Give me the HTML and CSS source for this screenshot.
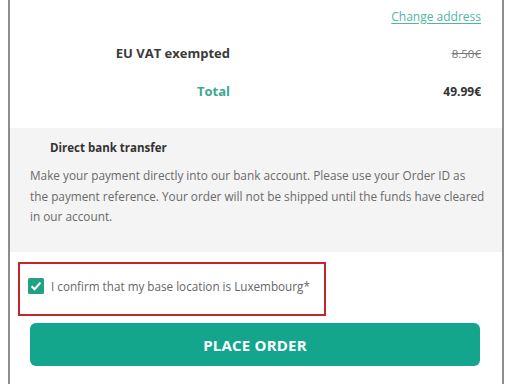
FILE: index.html
```html
<!DOCTYPE html>
<html>
<head>
<meta charset="utf-8">
<link rel="stylesheet" href="styles.css">
</head>
<body>
<div class="panel">
  <section class="totals">
    <div class="change-row"><a class="change-link" href="#">Change address</a></div>
    <div class="sum-row">
      <div class="sum-label">EU VAT exempted</div>
      <div class="sum-value strike">8.50€</div>
    </div>
    <div class="sum-row total-row">
      <div class="sum-label teal">Total</div>
      <div class="sum-value bold">49.99€</div>
    </div>
  </section>
  <section class="payment">
    <div class="pay-title">Direct bank transfer</div>
    <p class="pay-desc">Make your payment directly into our bank account. Please use your Order ID as<br>the payment reference. Your order will not be shipped until the funds have cleared<br>in our account.</p>
  </section>
  <section class="confirm">
    <div class="confirm-box">
      <span class="check">
        <svg width="16" height="16" viewBox="0 0 16 16"><rect width="16" height="16" rx="1.5" fill="#21a383"/><path d="M3.6 8.2 L6.6 11.2 L12.4 4.6" fill="none" stroke="#fff" stroke-width="2"/></svg>
      </span>
      <span class="confirm-text">I confirm that my base location is Luxembourg*</span>
    </div>
    <button class="place-order">PLACE ORDER</button>
  </section>
</div>
</body>
</html>
```
FILE: styles.css
```css
html, body {
  margin: 0;
  padding: 0;
  background: #fff;
}
body {
  font-family: "Open Sans", "DejaVu Sans", sans-serif;
  color: #444;
}
.panel {
  margin-left: 8px;
  width: 492px;
  height: 384px;
  border-left: 2px solid #8d8d8d;
  border-right: 2px solid #8d8d8d;
  overflow: hidden;
}
.totals {
  height: 128px;
  background: #fff;
  padding-top: 7px;
  box-sizing: border-box;
}
.change-row {
  display: flex;
  justify-content: flex-end;
  padding-right: 21px;
  height: 18px;
  align-items: center;
}
.change-link {
  color: #52b4a4;
  font-size: 12px;
  text-decoration: underline;
  text-underline-offset: 2px;
}
.sum-row {
  display: grid;
  grid-template-columns: 220px 1fr;
  padding-right: 21px;
  margin-top: 19px;
  height: 18px;
  align-items: center;
}
.total-row {
  margin-top: 20px;
}
.sum-label {
  text-align: right;
  font-weight: 700;
  font-size: 13px;
  color: #3a3a3a;
}
.sum-label.teal {
  color: #3aa892;
}
.sum-value {
  text-align: right;
  font-size: 11.5px;
}
.strike {
  text-decoration: line-through;
  color: #777;
}
.bold {
  font-weight: 700;
  color: #333;
  font-size: 12px;
}
.payment {
  background: #f4f4f4;
  height: 124px;
  padding: 12px 6px 0 20px;
  box-sizing: border-box;
}
.pay-title {
  font-weight: 700;
  font-size: 11.5px;
  color: #333;
  padding-left: 20px;
}
.pay-desc {
  margin: 10px 0 0 0;
  font-size: 11.8px;
  line-height: 20.5px;
  color: #6a6a6a;
  white-space: nowrap;
}
.confirm {
  padding-top: 10px;
}
.confirm-box {
  margin-left: 8px;
  width: 308px;
  height: 54px;
  box-sizing: border-box;
  border: 2.5px solid #c0272d;
  display: flex;
  align-items: center;
  padding-left: 8px;
  padding-bottom: 7px;
  gap: 7px;
}
.check {
  display: flex;
  width: 16px;
  height: 16px;
}
.confirm-text {
  font-size: 11.7px;
  color: #666;
}
.place-order {
  display: block;
  margin: 7px 0 0 20px;
  width: 450px;
  height: 43px;
  border: none;
  border-radius: 6px;
  background: #14a68c;
  color: #fff;
  font-family: "Open Sans", "DejaVu Sans", sans-serif;
  font-weight: 700;
  font-size: 15px;
  letter-spacing: 0.2px;
}
```
